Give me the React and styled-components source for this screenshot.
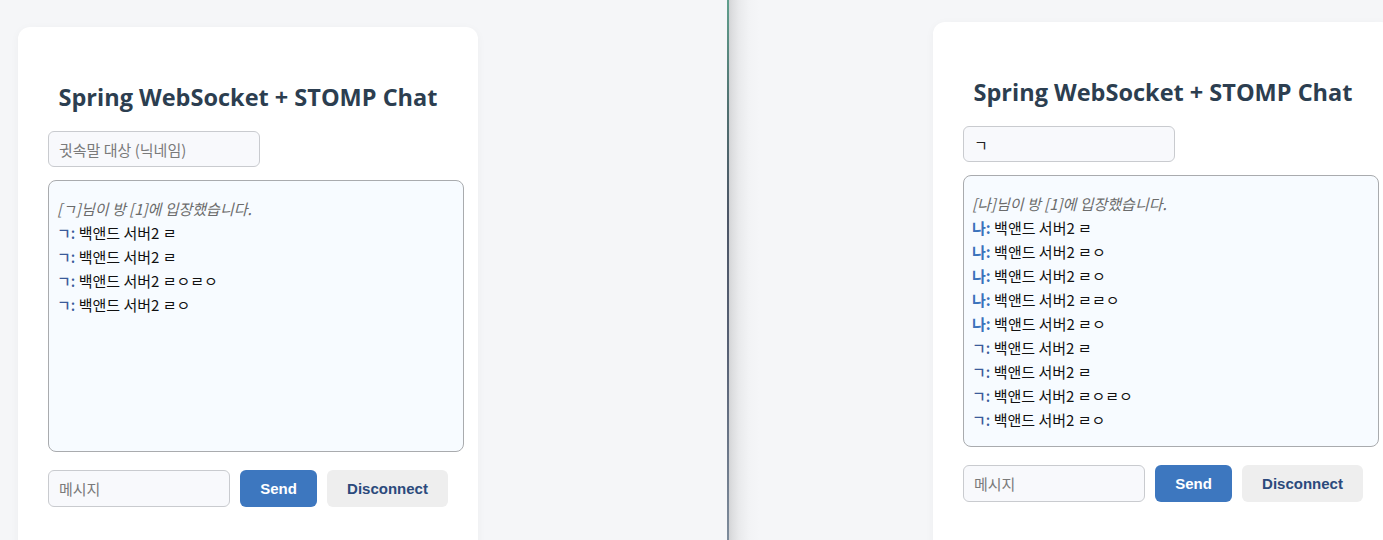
import React from 'react';
import styled, { createGlobalStyle } from 'styled-components';

const GlobalStyle = createGlobalStyle`
  html, body {
    margin: 0;
    padding: 0;
    height: 100%;
    overflow: hidden;
  }
  body {
    font-family: "Noto Sans", "Noto Sans CJK KR", sans-serif;
    background: #f5f6f8;
  }
`;

const Screen = styled.div`
  display: flex;
  width: 1383px;
  height: 540px;
  overflow: hidden;
`;

const Pane = styled.div`
  display: flex;
  align-items: flex-start;
  height: 100%;
  box-sizing: border-box;
  flex: ${(p) => (p.$grow ? '1' : '0 0 727px')};
  padding: ${(p) => p.$pad};
  background: ${(p) =>
    p.$shaded
      ? 'linear-gradient(90deg, #d3d4d6 0px, #dcdddf 3px, #e9eaec 10px, #f2f3f5 20px, #f5f6f8 30px)'
      : '#f5f6f8'};
`;

const Divider = styled.div`
  flex: 0 0 2px;
  height: 100%;
  background: linear-gradient(180deg, #5f9f8d 0%, #4f6f70 20%, #4b5566 40%, #566074 65%, #7d8b9b 100%);
`;

const Card = styled.div`
  flex: 0 0 460px;
  width: 460px;
  min-height: 600px;
  box-sizing: border-box;
  padding: 30px;
  background: #fff;
  border-radius: 12px;
  box-shadow: 0 2px 10px rgba(0, 0, 0, 0.04);
`;

const Title = styled.h2`
  margin: 24px 0 18px;
  font-family: "Open Sans", "Noto Sans", sans-serif;
  font-size: 23.5px;
  line-height: 32px;
  font-weight: 700;
  color: #2c3e50;
  text-align: center;
  white-space: nowrap;
`;

const Field = styled.div`
  box-sizing: border-box;
  width: ${(p) => p.$w}px;
  height: ${(p) => p.$h}px;
  display: flex;
  align-items: center;
  padding: 0 10px;
  border: 1px solid #c9cbcf;
  border-radius: 6px;
  background: #f8f9fc;
  font-family: "Noto Sans CJK KR", sans-serif;
  font-size: 15px;
  color: ${(p) => (p.$filled ? '#222' : '#7a7a7a')};
`;

const ChatBox = styled.div`
  box-sizing: border-box;
  width: 416px;
  height: 272px;
  margin: 13px 0 18px;
  padding: 16px 8px;
  border: 1px solid #a9abae;
  border-radius: 8px;
  background: #f7fbff;
  overflow: hidden;
  font-family: "Noto Sans CJK KR", sans-serif;
  font-size: 15px;
  line-height: 24px;
  color: #111;
`;

const Notice = styled.div`
  font-style: italic;
  color: #6b6b6b;
`;

const Line = styled.div`
  white-space: nowrap;
`;

const Sender = styled.b`
  color: ${(p) => (p.$me ? '#3a72bb' : '#3b5b9a')};
  font-weight: ${(p) => (p.$me ? 700 : 500)};
`;

const Row = styled.div`
  display: flex;
  gap: 10px;
`;

const Button = styled.button`
  box-sizing: border-box;
  height: 37px;
  width: ${(p) => p.$w}px;
  border: none;
  border-radius: 6px;
  font-family: "Liberation Sans", Arial, sans-serif;
  font-size: 15px;
  font-weight: 700;
  cursor: pointer;
  background: ${(p) => (p.$primary ? '#3d77bf' : '#eeeeee')};
  color: ${(p) => (p.$primary ? '#ffffff' : '#2b4a7c')};
`;

const ChatWindow = ({ whisper, messages }) => (
  <Card>
    <Title>Spring WebSocket + STOMP Chat</Title>
    <Field $w={212} $h={36} $filled={!!whisper}>
      {whisper || '귓속말 대상 (닉네임)'}
    </Field>
    <ChatBox>
      {messages.map((m, i) =>
        m.notice ? (
          <Notice key={i}>{m.notice}</Notice>
        ) : (
          <Line key={i}>
            <Sender $me={m.from === '나'}>{m.from}:</Sender> {m.text}
          </Line>
        )
      )}
    </ChatBox>
    <Row>
      <Field $w={182} $h={37}>메시지</Field>
      <Button $primary $w={77}>Send</Button>
      <Button $w={121}>Disconnect</Button>
    </Row>
  </Card>
);

const leftMessages = [
  { notice: '[ㄱ]님이 방 [1]에 입장했습니다.' },
  { from: 'ㄱ', text: '백앤드 서버2 ㄹ' },
  { from: 'ㄱ', text: '백앤드 서버2 ㄹ' },
  { from: 'ㄱ', text: '백앤드 서버2 ㄹㅇㄹㅇ' },
  { from: 'ㄱ', text: '백앤드 서버2 ㄹㅇ' },
];

const rightMessages = [
  { notice: '[나]님이 방 [1]에 입장했습니다.' },
  { from: '나', text: '백앤드 서버2 ㄹ' },
  { from: '나', text: '백앤드 서버2 ㄹㅇ' },
  { from: '나', text: '백앤드 서버2 ㄹㅇ' },
  { from: '나', text: '백앤드 서버2 ㄹㄹㅇ' },
  { from: '나', text: '백앤드 서버2 ㄹㅇ' },
  { from: 'ㄱ', text: '백앤드 서버2 ㄹ' },
  { from: 'ㄱ', text: '백앤드 서버2 ㄹ' },
  { from: 'ㄱ', text: '백앤드 서버2 ㄹㅇㄹㅇ' },
  { from: 'ㄱ', text: '백앤드 서버2 ㄹㅇ' },
];

const App = () => (
  <Screen>
    <GlobalStyle />
    <Pane $pad="27px 0 0 18px">
      <ChatWindow messages={leftMessages} />
    </Pane>
    <Divider />
    <Pane $grow $shaded $pad="22px 0 0 204px">
      <ChatWindow whisper="ㄱ" messages={rightMessages} />
    </Pane>
  </Screen>
);

export default App;
